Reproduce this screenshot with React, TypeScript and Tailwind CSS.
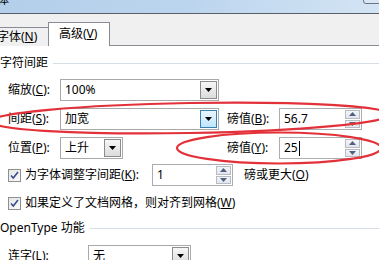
import React from 'react';

const font = { fontFamily: '"Noto Sans", "Noto Sans CJK SC", sans-serif' };

const Arrow: React.FC = () => (
    <svg width="7" height="4" viewBox="0 0 7 4">
        <path d="M0 0h7L3.5 4z" fill="#000" />
    </svg>
);

const Combo: React.FC<{ value: string; width: string; hot?: boolean }> = ({ value, width, hot }) => (
    <div className={`${width} h-[22px] border border-[#a9a9a9] bg-white flex items-stretch`}>
        <span className="flex-1 pl-[4px] leading-[20px] text-[12px] text-black">{value}</span>
        <div
            className={`w-[17px] my-[1px] mr-[1px] flex items-center justify-center border ${
                hot
                    ? 'border-[#3c7fb1] bg-gradient-to-b from-[#eaf6fd] to-[#bee6fd]'
                    : 'border-[#8c8c8c] bg-gradient-to-b from-[#f6f6f6] to-[#dcdcdc]'
            }`}
        >
            <Arrow />
        </div>
    </div>
);

const Spin: React.FC<{ value: string; width: string; cursor?: boolean }> = ({ value, width, cursor }) => (
    <div className={`${width} h-[22px] border border-[#abadb3] bg-white flex items-stretch`}>
        <span className="flex-1 pl-[4px] leading-[20px] text-[12px] text-black flex items-center">
            {value}
            {cursor && <span className="inline-block w-px h-[15px] bg-black ml-px" />}
        </span>
        <div className="w-[15px] flex flex-col gap-px py-px mr-[1px]">
            {[0, 1].map((i) => (
                <div
                    key={i}
                    className="flex-1 border border-[#b7bcc4] bg-gradient-to-b from-[#f4f5f7] to-[#e3e5ea] flex items-center justify-center"
                >
                    <svg width="7" height="4" viewBox="0 0 7 4">
                        <path d={i === 0 ? 'M0 4h7L3.5 0z' : 'M0 0h7L3.5 4z'} fill="#4d6185" />
                    </svg>
                </div>
            ))}
        </div>
    </div>
);

const Check: React.FC = () => (
    <div className="w-[13px] h-[13px] border border-[#8e8f8f] bg-gradient-to-br from-[#e6e6e6] to-[#fbfbfb] flex items-center justify-center">
        <svg width="9" height="9" viewBox="0 0 9 9">
            <path d="M1 4.5l2.3 2.6L8 1" stroke="#3a4d8f" strokeWidth="1.6" fill="none" />
        </svg>
    </div>
);

const Group: React.FC<{ title: string }> = ({ title }) => (
    <div className="flex items-center gap-[5px] h-[14px] text-[12px] text-black">
        <span className="whitespace-nowrap leading-[14px]">{title}</span>
        <div className="flex-1 h-px bg-[#d5dfe5]" />
    </div>
);

const App: React.FC = () => {
    return (
        <div className="relative w-[379px] h-[260px] overflow-hidden bg-white" style={font}>
            {/* title bar */}
            <div className="h-[14px] border-b border-[#595f69] bg-gradient-to-r from-[#b4cfea] via-[#bcd5ee] to-[#d3e4f4] relative overflow-hidden">
                <span className="absolute left-[-3px] top-[-7px] text-[12px] text-black leading-[14px]">体</span>
                <div className="absolute right-[-6px] top-[-10px] w-[22px] h-[14px] rounded-[3px] border border-[#6d7580] bg-[#d9e6f4]" />
            </div>
            {/* tabs */}
            <div className="h-[32px] bg-[#f0f0f0] border-b border-[#898c95] flex items-end relative">
                <div className="w-[49px] h-[19px] mb-[-1px] border border-l-0 border-b-0 border-[#898c95] bg-[#f0f0f0] text-[12px] leading-[17px] pl-0 text-black">
                    <span className="ml-[-3px]">字体(<u>N</u>)</span>
                </div>
                <div className="w-[62px] h-[24px] mb-[-1px] ml-[-1px] border border-b-0 border-[#898c95] bg-white text-[12px] leading-[22px] pl-[10px] text-black">
                    高级(<u>V</u>)
                </div>
            </div>
            {/* content */}
            <div className="text-[12px] text-black leading-[14px]">
                <div className="mt-[10px]">
                    <Group title="字符间距" />
                </div>
                <div className="ml-[8px] mt-[9px] flex flex-col gap-[7px]">
                    <div className="flex items-center">
                        <span className="w-[52px]">缩放(<u>C</u>):</span>
                        <Combo value="100%" width="w-[159px]" />
                    </div>
                    <div className="flex items-center">
                        <span className="w-[52px]">间距(<u>S</u>):</span>
                        <Combo value="加宽" width="w-[159px]" hot />
                        <span className="w-[52px] ml-[8px]">磅值(<u>B</u>):</span>
                        <Spin value="56.7" width="w-[83px]" />
                    </div>
                    <div className="flex items-center">
                        <span className="w-[52px]">位置(<u>P</u>):</span>
                        <Combo value="上升" width="w-[63px]" />
                        <span className="w-[52px] ml-[104px]">磅值(<u>Y</u>):</span>
                        <Spin value="25" width="w-[83px]" cursor />
                    </div>
                    <div className="flex items-center mt-[-2px]">
                        <Check />
                        <span className="ml-[4px] w-[127px]">为字体调整字间距(<u>K</u>):</span>
                        <Spin value="1" width="w-[81px]" />
                        <span className="ml-[11px]">磅或更大(<u>O</u>)</span>
                    </div>
                    <div className="flex items-center mt-[3px]">
                        <Check />
                        <span className="ml-[4px]">如果定义了文档网格，则对齐到网格(<u>W</u>)</span>
                    </div>
                </div>
                <div className="mt-[11px]">
                    <Group title="OpenType 功能" />
                </div>
                <div className="ml-[8px] mt-[10px] flex items-center">
                    <span className="w-[80px]">连字(<u>L</u>):</span>
                    <Combo value="无" width="w-[103px]" />
                </div>
            </div>
            {/* red hand-drawn marks */}
            <svg className="absolute inset-0 pointer-events-none" width="379" height="260">
                <ellipse cx="190" cy="118" rx="200" ry="15" fill="none" stroke="#e3313a" strokeWidth="2.2" transform="rotate(-1 190 118)" />
                <ellipse cx="279" cy="148" rx="102" ry="15.5" fill="none" stroke="#e3313a" strokeWidth="2.2" />
            </svg>
        </div>
    );
};

export default App;
